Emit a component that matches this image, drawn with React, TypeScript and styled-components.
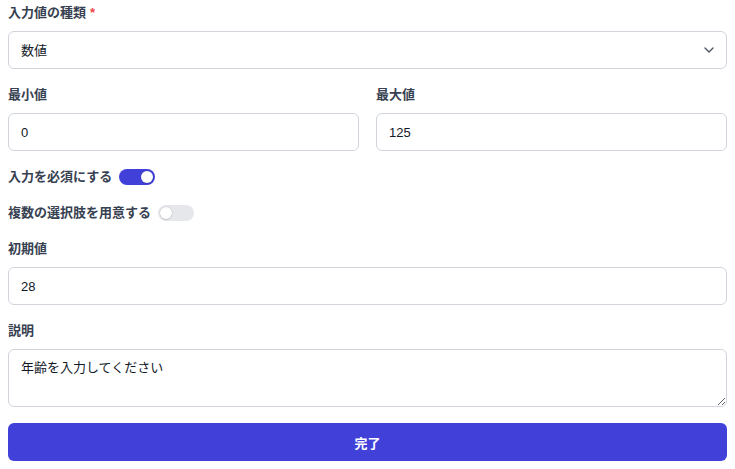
import React, { useState } from 'react'
import styled, { createGlobalStyle } from 'styled-components'
import { ChevronDown } from 'lucide-react'

const GlobalStyle = createGlobalStyle`
  html, body {
    margin: 0;
    padding: 0;
    background: #ffffff;
  }
  body {
    font-family: "Liberation Sans", "Noto Sans CJK JP", sans-serif;
    color: #111827;
  }
`

const Form = styled.form`
  display: flex;
  flex-direction: column;
  gap: 16px;
  padding: 3px 8px 8px;
`

const Field = styled.div`
  display: flex;
  flex-direction: column;
  gap: 8px;
  min-width: 0;
`

const Row = styled.div`
  display: grid;
  grid-template-columns: 1fr 1fr;
  gap: 17px;
`

const Label = styled.label`
  font-size: 13px;
  line-height: 20px;
  font-weight: 700;
  color: #374151;
`

const Required = styled.span`
  color: #ef4444;
  margin-left: 4px;
`

const Input = styled.input`
  box-sizing: border-box;
  width: 100%;
  height: 38px;
  padding: 0 12px;
  border: 1px solid #d1d5db;
  border-radius: 6px;
  font: inherit;
  font-size: 13px;
  color: #111827;
  background: #fff;
  outline: none;
`

const SelectWrap = styled.div`
  position: relative;
`

const Select = styled.select`
  box-sizing: border-box;
  width: 100%;
  height: 38px;
  padding: 0 36px 0 12px;
  border: 1px solid #d1d5db;
  border-radius: 6px;
  font: inherit;
  font-size: 13px;
  color: #111827;
  background: #fff;
  appearance: none;
  outline: none;
`

const Chevron = styled(ChevronDown)`
  position: absolute;
  right: 10px;
  top: 50%;
  transform: translateY(-50%);
  color: #4b5563;
  pointer-events: none;
`

const TextArea = styled.textarea`
  box-sizing: border-box;
  width: 100%;
  height: 58px;
  padding: 8px 12px;
  border: 1px solid #d1d5db;
  border-radius: 6px;
  font: inherit;
  font-size: 13px;
  line-height: 20px;
  color: #111827;
  background: #fff;
  outline: none;
  display: block;
`

const ToggleRow = styled.div`
  display: flex;
  align-items: center;
  gap: 7px;
  height: 20px;
`

const Switch = styled.button<{ $on: boolean }>`
  position: relative;
  width: 36px;
  height: 16px;
  padding: 0;
  border: none;
  border-radius: 999px;
  background: ${(p) => (p.$on ? '#4141d9' : '#e5e7eb')};
  cursor: pointer;
  flex-shrink: 0;

  &::after {
    content: '';
    position: absolute;
    top: 2px;
    left: ${(p) => (p.$on ? '22px' : '2px')};
    width: 12px;
    height: 12px;
    border-radius: 50%;
    background: #fff;
    box-shadow: 0 0 0 0.5px rgba(0, 0, 0, 0.12), 0 1px 1px rgba(0, 0, 0, 0.1);
  }
`

const Submit = styled.button`
  height: 38px;
  border: none;
  border-radius: 6px;
  background: #4141d9;
  color: #fff;
  font: inherit;
  font-size: 13px;
  font-weight: 700;
  cursor: pointer;
`

export default function App() {
  const [required, setRequired] = useState(true)
  const [multiple, setMultiple] = useState(false)

  return (
    <>
      <GlobalStyle />
      <Form onSubmit={(e) => e.preventDefault()}>
        <Field>
          <Label>
            入力値の種類<Required>*</Required>
          </Label>
          <SelectWrap>
            <Select defaultValue="number">
              <option value="number">数値</option>
              <option value="text">テキスト</option>
            </Select>
            <Chevron size={16} strokeWidth={2} />
          </SelectWrap>
        </Field>

        <Row>
          <Field>
            <Label>最小値</Label>
            <Input defaultValue="0" />
          </Field>
          <Field>
            <Label>最大値</Label>
            <Input defaultValue="125" />
          </Field>
        </Row>

        <ToggleRow>
          <Label>入力を必須にする</Label>
          <Switch type="button" $on={required} onClick={() => setRequired(!required)} />
        </ToggleRow>

        <ToggleRow>
          <Label>複数の選択肢を用意する</Label>
          <Switch type="button" $on={multiple} onClick={() => setMultiple(!multiple)} />
        </ToggleRow>

        <Field>
          <Label>初期値</Label>
          <Input defaultValue="28" />
        </Field>

        <Field>
          <Label>説明</Label>
          <TextArea defaultValue="年齢を入力してください" />
        </Field>

        <Submit type="submit">完了</Submit>
      </Form>
    </>
  )
}
